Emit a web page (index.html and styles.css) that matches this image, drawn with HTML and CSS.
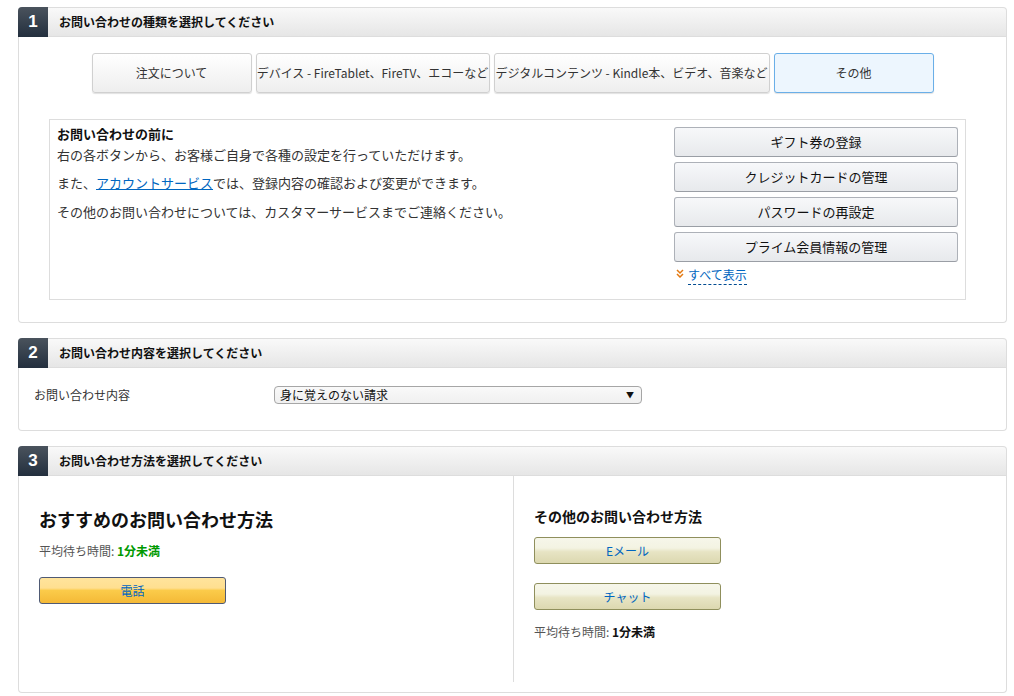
FILE: index.html
```html
<!DOCTYPE html>
<html lang="ja">
<head>
<meta charset="utf-8">
<title>お問い合わせ</title>
<link rel="stylesheet" href="styles.css">
</head>
<body>
<div class="page">
  <section class="section">
    <div class="sec-head"><span class="num">1</span><span class="title">お問い合わせの種類を選択してください</span></div>
    <div class="sec-body body1">
      <div class="tabs">
        <div class="tab w160">注文について</div>
        <div class="tab w234">デバイス - FireTablet、FireTV、エコーなど</div>
        <div class="tab w276">デジタルコンテンツ - Kindle本、ビデオ、音楽など</div>
        <div class="tab w160 selected">その他</div>
      </div>
      <div class="info">
        <div class="info-text">
          <p class="lead"><b>お問い合わせの前に</b><br>右の各ボタンから、お客様ご自身で各種の設定を行っていただけます。</p>
          <p class="p2">また、<a class="link" href="#">アカウントサービス</a>では、登録内容の確認および変更ができます。</p>
          <p class="p3">その他のお問い合わせについては、カスタマーサービスまでご連絡ください。</p>
        </div>
        <div class="quick">
          <div class="qbtn">ギフト券の登録</div>
          <div class="qbtn">クレジットカードの管理</div>
          <div class="qbtn">パスワードの再設定</div>
          <div class="qbtn">プライム会員情報の管理</div>
          <div class="showall">
            <svg class="chev" width="8" height="9" viewBox="0 0 8 9"><polyline points="1,1 4,4 7,1" fill="none" stroke="#e47911" stroke-width="1.5"/><polyline points="1,5 4,8 7,5" fill="none" stroke="#e47911" stroke-width="1.5"/></svg>
            <a class="dash" href="#">すべて表示</a>
          </div>
        </div>
      </div>
    </div>
  </section>

  <section class="section">
    <div class="sec-head"><span class="num">2</span><span class="title">お問い合わせ内容を選択してください</span></div>
    <div class="sec-body body2">
      <div class="label">お問い合わせ内容</div>
      <div class="select"><span>身に覚えのない請求</span><span class="arrow">▼</span></div>
    </div>
  </section>

  <section class="section">
    <div class="sec-head"><span class="num">3</span><span class="title">お問い合わせ方法を選択してください</span></div>
    <div class="sec-body body3">
      <div class="col left">
        <h2 class="big">おすすめのお問い合わせ方法</h2>
        <p class="wait">平均待ち時間: <b class="green">1分未満</b></p>
        <div class="btn gold">電話</div>
      </div>
      <div class="col right">
        <h3 class="mid">その他のお問い合わせ方法</h3>
        <div class="btn olive first">Eメール</div>
        <div class="btn olive second">チャット</div>
        <p class="wait small">平均待ち時間: <b>1分未満</b></p>
      </div>
    </div>
  </section>
</div>
</body>
</html>
```

FILE: styles.css
```css
* { box-sizing: border-box; }
html, body { margin: 0; padding: 0; background: #fff; }
body {
  font-family: "Noto Sans CJK JP", "Liberation Sans", sans-serif;
  color: #333;
  font-size: 13px;
}
p { margin: 0; }
.page {
  padding: 7px 7px 0 18px;
  display: flex;
  flex-direction: column;
  gap: 15px;
}
.section { width: 989px; }
.sec-head {
  display: flex;
  align-items: center;
  height: 30px;
  border: 1px solid #dddddd;
  border-left: none;
  border-radius: 4px 4px 0 0;
  background: linear-gradient(#f9f9f9, #e6e6e6);
}
.num {
  width: 30px;
  height: 30px;
  margin: -1px 0;
  border-radius: 4px 0 0 0;
  background: linear-gradient(#4a535d, #232f3e);
  color: #fff;
  font-family: "Liberation Sans", sans-serif;
  font-weight: bold;
  font-size: 17px;
  display: flex;
  align-items: center;
  justify-content: center;
}
.title {
  padding: 0 0 2px 11px;
  font-size: 12px;
  font-weight: bold;
  color: #111;
}
.sec-body {
  border: 1px solid #dddddd;
  border-top: none;
  border-radius: 0 0 4px 4px;
}
.body1 { padding: 16px 0 22px 0; }
.tabs {
  display: flex;
  justify-content: center;
  gap: 4px;
}
.tab {
  height: 40px;
  display: flex;
  align-items: center;
  justify-content: center;
  white-space: nowrap;
  font-size: 12px;
  color: #333;
  padding-bottom: 2px;
  border: 1px solid #d0d0d0;
  border-radius: 3px;
  background: linear-gradient(#ffffff, #eeeeee);
  box-shadow: 0 1px 1px rgba(0,0,0,0.12);
}
.w160 { width: 160px; }
.w234 { width: 234px; }
.w276 { width: 276px; }
.tab.selected {
  background: #edf6fe;
  border-color: #6aafe8;
}
.info {
  margin: 26px 40px 0 30px;
  height: 181px;
  border: 1px solid #dddddd;
  display: flex;
  justify-content: space-between;
}
.info-text {
  padding: 3px 0 0 7px;
  line-height: 21px;
  font-size: 13px;
  color: #333;
}
.info-text b { color: #111; }
.info-text .p2 { margin-top: 7px; }
.info-text .p3 { margin-top: 8px; }
.link { color: #0066c0; text-decoration: underline; }
.quick {
  padding: 7px 7px 0 0;
  display: flex;
  flex-direction: column;
  gap: 5px;
  width: 291px;
}
.qbtn {
  height: 30px;
  display: flex;
  align-items: center;
  justify-content: center;
  padding-bottom: 2px;
  font-size: 13px;
  color: #111;
  border: 1px solid #adb1b8;
  border-bottom-color: #9a9ea5;
  border-radius: 3px;
  background: linear-gradient(#f7f8fa, #e7e9ec);
}
.showall {
  display: flex;
  align-items: flex-start;
  gap: 4px;
  padding-left: 2px;
  margin-top: 0;
  font-size: 12px;
}
.chev { margin-top: 2px; }
.dash {
  color: #0066c0;
  text-decoration: none;
  border-bottom: 1px dashed #004b91;
  line-height: 16px;
  padding-bottom: 1px;
}
.body2 {
  height: 63px;
  display: flex;
  align-items: flex-start;
  padding: 18px 0 0 15px;
}
.label { width: 240px; font-size: 12px; line-height: 18px; color: #333; }
.select {
  width: 368px;
  height: 18px;
  border: 1px solid #a6a6a6;
  border-radius: 4px;
  background: linear-gradient(#f9f9f9, #f0f0f0);
  display: flex;
  align-items: center;
  justify-content: space-between;
  padding: 0 7px 1px 5px;
  font-size: 12px;
  color: #111;
}
.arrow { font-size: 8px; color: #111; }
.body3 {
  display: flex;
  padding-bottom: 10px;
}
.col { height: 206px; }
.left {
  width: 495px;
  border-right: 1px solid #dddddd;
  padding: 31px 0 0 20px;
}
.right { padding: 30px 0 0 20px; }
.big {
  margin: 0;
  font-size: 18px;
  line-height: 24px;
  font-weight: bold;
  color: #111;
}
.mid {
  margin: 0;
  font-size: 14px;
  line-height: 20px;
  font-weight: bold;
  color: #111;
}
.wait {
  margin-top: 12px;
  font-size: 12px;
  line-height: 16px;
  color: #555;
}
.wait b { color: #111; }
.wait b.green { color: #009900; }
.btn {
  width: 187px;
  height: 27px;
  display: flex;
  align-items: center;
  justify-content: center;
  padding-bottom: 1px;
  border-radius: 3px;
  font-size: 12px;
  color: #0066c0;
}
.gold {
  margin-top: 18px;
  border: 1px solid #4f5a74;
  background: linear-gradient(#ffe49c 0%, #ffdf90 40%, #fbcb4a 50%, #f4b937 100%);
}
.olive {
  border: 1px solid #8f8f5c;
  background: linear-gradient(#f6f6ea 0%, #f3f3e2 40%, #e7e4c4 55%, #dcd8b0 100%);
}
.first { margin-top: 11px; }
.second { margin-top: 19px; }
.small { margin-top: 14px; }
```
